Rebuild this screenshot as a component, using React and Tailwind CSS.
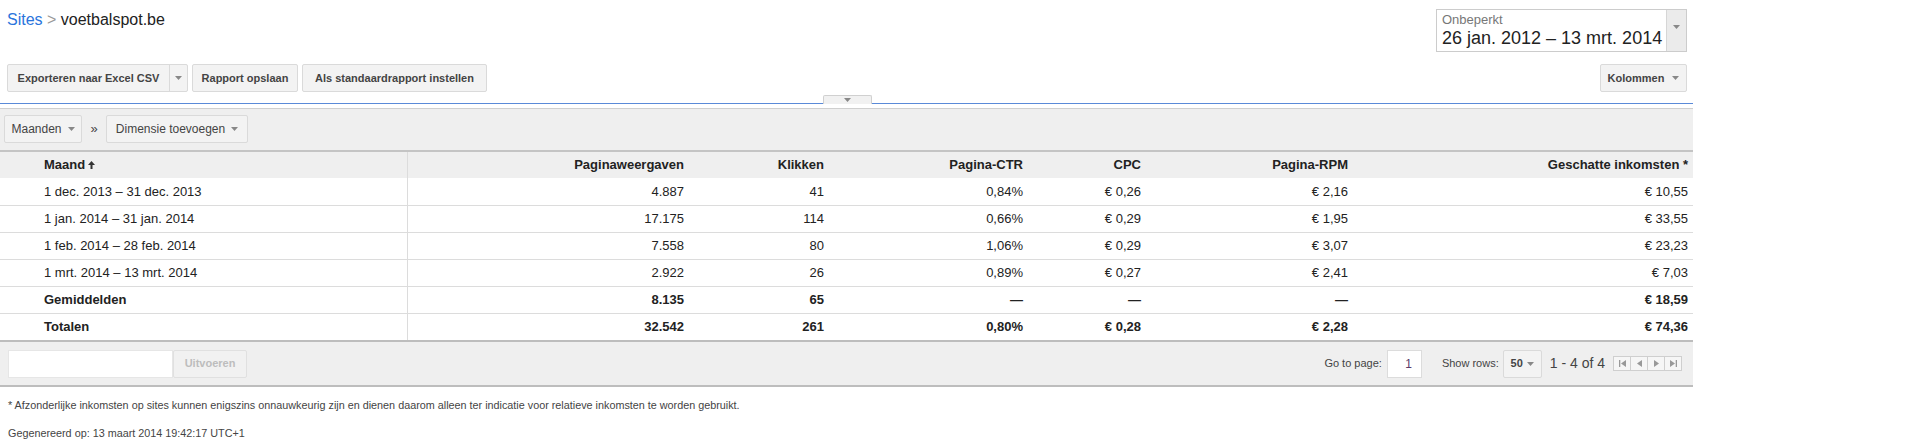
import React from "react";

const rows = [
  { label: "1 dec. 2013 – 31 dec. 2013", pv: "4.887", kl: "41", ctr: "0,84%", cpc: "€ 0,26", rpm: "€ 2,16", ink: "€ 10,55" },
  { label: "1 jan. 2014 – 31 jan. 2014", pv: "17.175", kl: "114", ctr: "0,66%", cpc: "€ 0,29", rpm: "€ 1,95", ink: "€ 33,55" },
  { label: "1 feb. 2014 – 28 feb. 2014", pv: "7.558", kl: "80", ctr: "1,06%", cpc: "€ 0,29", rpm: "€ 3,07", ink: "€ 23,23" },
  { label: "1 mrt. 2014 – 13 mrt. 2014", pv: "2.922", kl: "26", ctr: "0,89%", cpc: "€ 0,27", rpm: "€ 2,41", ink: "€ 7,03" },
  { label: "Gemiddelden", pv: "8.135", kl: "65", ctr: "—", cpc: "—", rpm: "—", ink: "€ 18,59", bold: true },
  { label: "Totalen", pv: "32.542", kl: "261", ctr: "0,80%", cpc: "€ 0,28", rpm: "€ 2,28", ink: "€ 74,36", bold: true },
];

function Caret({ className = "" }) {
  return (
    <svg width="7" height="4" viewBox="0 0 7 4" className={className}>
      <path d="M0 0h7L3.5 4z" fill="#888" />
    </svg>
  );
}

function Btn({ children, className = "" }) {
  return (
    <div
      className={
        "h-[28px] flex items-center justify-center border border-[#dadada] rounded-[2px] bg-[#f3f3f3] text-[11px] font-bold text-[#444] " +
        className
      }
    >
      {children}
    </div>
  );
}

function PagerBtn({ children }) {
  return (
    <div className="w-[18px] h-[15px] flex items-center justify-center border border-[#cfcfcf] bg-[#f6f6f6] -ml-px first:ml-0">
      {children}
    </div>
  );
}

export default function App() {
  const th = "h-[27px] pr-[5px] text-right text-[13px] font-bold text-[#222] whitespace-nowrap";
  return (
    <div className="w-[1693px] bg-white font-['Liberation_Sans',Arial,sans-serif] text-[#222]">
      {/* top */}
      <div className="flex justify-between items-start pl-[7px] pr-[6px] pt-[9px]">
        <div className="text-[16px] leading-[18px] pt-[2px]">
          <span className="text-[#2a74dc]">Sites</span>
          <span className="text-[#999]"> &gt; </span>
          <span className="text-[#222]">voetbalspot.be</span>
        </div>
        <div className="w-[251px] h-[43px] flex border border-[#cccccc] bg-white">
          <div className="flex-1 pl-[5px] pt-[2px]">
            <div className="text-[13px] leading-[15px] text-[#777]">Onbeperkt</div>
            <div className="text-[18px] leading-[22px] text-[#222] whitespace-nowrap">26 jan. 2012 – 13 mrt. 2014</div>
          </div>
          <div className="w-[20px] bg-[#ebebeb] border-l border-[#d6d6d6] flex justify-center pt-[15px]">
            <Caret />
          </div>
        </div>
      </div>

      {/* action buttons */}
      <div className="flex justify-between pl-[7px] pr-[6px] mt-[12px]">
        <div className="flex gap-[4px]">
          <div className="flex h-[28px] border border-[#dadada] rounded-[2px] bg-[#f3f3f3] text-[11px] font-bold text-[#444]">
            <div className="w-[161px] flex items-center justify-center">Exporteren naar Excel CSV</div>
            <div className="w-[18px] border-l border-[#dadada] flex items-center justify-center">
              <Caret />
            </div>
          </div>
          <Btn className="w-[106px]">Rapport opslaan</Btn>
          <Btn className="w-[185px]">Als standaardrapport instellen</Btn>
        </div>
        <Btn className="w-[87px] gap-[8px]">
          <span>Kolommen</span>
          <Caret />
        </Btn>
      </div>

      {/* divider with collapse handle */}
      <div className="relative mt-[11px]">
        <div className="h-px bg-[#5a8ad8]" />
        <div className="absolute left-[823px] -top-[8px] w-[49px] h-[9px] bg-[#f1f1f1] border border-b-0 border-[#d0d0d0] rounded-t-[2px] flex justify-center pt-[2px]">
          <Caret />
        </div>
      </div>
      <div className="h-[4px]" />
      <div className="h-px bg-[#cfcfcf]" />

      {/* dimension toolbar */}
      <div className="h-[41px] bg-[#efefef] flex items-start pt-[6px] pl-[4px] text-[12px] text-[#444]">
        <div className="w-[78px] h-[28px] border border-[#dadada] rounded-[2px] bg-[#f3f3f3] flex items-center justify-center gap-[6px]">
          <span>Maanden</span>
          <Caret />
        </div>
        <div className="w-[24px] h-[28px] flex items-center justify-center text-[13px]">»</div>
        <div className="w-[142px] h-[28px] border border-[#dadada] rounded-[2px] bg-[#f3f3f3] flex items-center justify-center gap-[6px]">
          <span>Dimensie toevoegen</span>
          <Caret />
        </div>
      </div>

      {/* table */}
      <table className="w-[1693px] table-fixed border-collapse">
        <colgroup>
          <col className="w-[407px]" />
          <col className="w-[282px]" />
          <col className="w-[140px]" />
          <col className="w-[199px]" />
          <col className="w-[118px]" />
          <col className="w-[207px]" />
          <col className="w-[340px]" />
        </colgroup>
        <thead>
          <tr className="bg-[#efefef] border-t-2 border-[#c4c4c4]">
            <th className="h-[27px] pl-[44px] text-left text-[13px] font-bold text-[#222] border-r border-[#dcdcdc]">
              <span className="inline-flex items-center gap-[3px]">
                Maand
                <svg width="7" height="8" viewBox="0 0 7 8">
                  <path d="M3.5 0L7 4H4.5v4h-2V4H0z" fill="#333" />
                </svg>
              </span>
            </th>
            <th className={th}>Paginaweergaven</th>
            <th className={th}>Klikken</th>
            <th className={th}>Pagina-CTR</th>
            <th className={th}>CPC</th>
            <th className={th}>Pagina-RPM</th>
            <th className={th}>Geschatte inkomsten *</th>
          </tr>
        </thead>
        <tbody>
          {rows.map((r, i) => {
            const td =
              "h-[27px] pr-[5px] text-right text-[13px] text-[#222] whitespace-nowrap " +
              (r.bold ? "font-bold" : "font-normal");
            return (
              <tr key={i} className={"bg-white " + (i < rows.length - 1 ? "border-b border-[#dcdcdc]" : "")}>
                <td className={"h-[27px] pl-[44px] text-left text-[13px] border-r border-[#dcdcdc] " + (r.bold ? "font-bold" : "font-normal")}>
                  {r.label}
                </td>
                <td className={td}>{r.pv}</td>
                <td className={td}>{r.kl}</td>
                <td className={td}>{r.ctr}</td>
                <td className={td}>{r.cpc}</td>
                <td className={td}>{r.rpm}</td>
                <td className={td}>{r.ink}</td>
              </tr>
            );
          })}
        </tbody>
      </table>

      {/* footer bar */}
      <div className="h-[47px] bg-[#efefef] border-t-2 border-b-2 border-[#bdbdbd] flex items-center justify-between pl-[8px] pr-[11px]">
        <div className="flex items-center">
          <div className="w-[165px] h-[28px] bg-white border border-[#e6e6e6]" />
          <div className="w-[74px] h-[28px] border border-[#e0e0e0] rounded-[2px] bg-[#f1f1f1] flex items-center justify-center text-[11px] font-bold text-[#bdbdbd]">
            Uitvoeren
          </div>
        </div>
        <div className="flex items-center text-[11px] text-[#444]">
          <span>Go to page:</span>
          <div className="ml-[5px] w-[35px] h-[28px] bg-white border border-[#dcdcdc] flex items-center justify-end pr-[9px] text-[12px] text-[#5a3a6a]">
            1
          </div>
          <span className="ml-[20px]">Show rows:</span>
          <div className="ml-[4px] w-[39px] h-[28px] border border-[#dadada] rounded-[2px] bg-[#f3f3f3] flex items-center justify-center gap-[4px] text-[11px] font-bold text-[#444]">
            <span>50</span>
            <Caret />
          </div>
          <span className="ml-[8px] text-[14px] text-[#444]">1 - 4 of 4</span>
          <div className="ml-[8px] flex">
            <PagerBtn>
              <svg width="7" height="7" viewBox="0 0 7 7">
                <path d="M0 0h1.3v7H0zM7 0v7L2 3.5z" fill="#999" />
              </svg>
            </PagerBtn>
            <PagerBtn>
              <svg width="5" height="7" viewBox="0 0 5 7">
                <path d="M5 0v7L0 3.5z" fill="#999" />
              </svg>
            </PagerBtn>
            <PagerBtn>
              <svg width="5" height="7" viewBox="0 0 5 7">
                <path d="M0 0v7L5 3.5z" fill="#999" />
              </svg>
            </PagerBtn>
            <PagerBtn>
              <svg width="7" height="7" viewBox="0 0 7 7">
                <path d="M0 0v7L5 3.5zM5.7 0H7v7H5.7z" fill="#999" />
              </svg>
            </PagerBtn>
          </div>
        </div>
      </div>

      {/* notes */}
      <div className="pl-[8px] pt-[12px] text-[10.8px] leading-[13px] text-[#444]">
        <p>* Afzonderlijke inkomsten op sites kunnen enigszins onnauwkeurig zijn en dienen daarom alleen ter indicatie voor relatieve inkomsten te worden gebruikt.</p>
        <p className="mt-[15px]">Gegenereerd op: 13 maart 2014 19:42:17 UTC+1</p>
      </div>
    </div>
  );
}
